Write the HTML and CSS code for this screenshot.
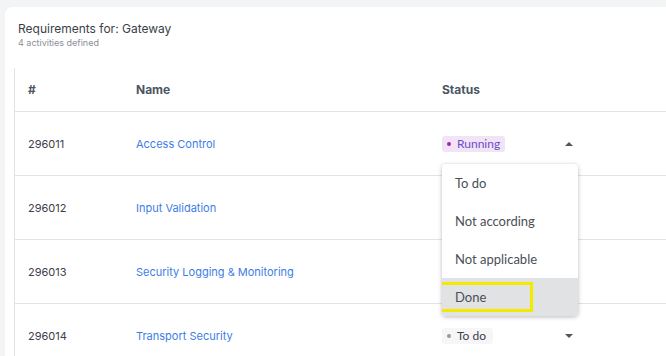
FILE: index.html
```html
<!DOCTYPE html>
<html lang="en">

<head>
    <meta charset="UTF-8">
    <meta name="viewport" content="width=device-width, initial-scale=1.0">
    <title>Requirements - Gateway</title>
    <link rel="stylesheet" href="styles.css">
</head>

<body>
    <section class="card">
        <div class="card-head">
            <h2 class="title">Requirements for: Gateway</h2>
            <p class="subtitle">4 activities defined</p>
        </div>

        <div class="table">
            <div class="row head">
                <div class="cell">#</div>
                <div class="cell">Name</div>
                <div class="cell">Status</div>
            </div>

            <div class="row">
                <div class="cell num">296011</div>
                <div class="cell"><a href="#" class="link">Access Control</a></div>
                <div class="cell">
                    <div class="select open">
                        <span class="badge running"><span class="dot"></span>Running</span>
                        <span class="caret up"></span>

                        <ul class="menu">
                            <li>To do</li>
                            <li>Not according</li>
                            <li>Not applicable</li>
                            <li class="active"><span class="focus">Done</span></li>
                        </ul>
                    </div>
                </div>
            </div>

            <div class="row">
                <div class="cell num">296012</div>
                <div class="cell"><a href="#" class="link">Input Validation</a></div>
                <div class="cell"></div>
            </div>

            <div class="row">
                <div class="cell num">296013</div>
                <div class="cell"><a href="#" class="link">Security Logging &amp; Monitoring</a></div>
                <div class="cell"></div>
            </div>

            <div class="row last">
                <div class="cell num">296014</div>
                <div class="cell"><a href="#" class="link">Transport Security</a></div>
                <div class="cell">
                    <div class="select">
                        <span class="badge todo"><span class="dot"></span>To do</span>
                        <span class="caret down"></span>
                    </div>
                </div>
            </div>
        </div>
    </section>
</body>

</html>
```

FILE: styles.css
```css
html,
body {
    height: 100%;
    overflow: hidden;
}

body {
    font-family: Inter, "Open Sans", sans-serif;
    background-color: #f3f4f6;
    margin: 0;
    padding: 7px 0 0 5px;
    box-sizing: border-box;
    display: flex;
}

.card {
    flex: 1;
    background: #fff;
    border-radius: 8px 0 0 0;
    padding: 14px 0 0 9px;
    box-sizing: border-box;
    overflow: hidden;
}

.card-head {
    padding-left: 4px;
}

.title {
    font-size: 12px;
    font-weight: 400;
    color: #3a3f47;
    margin: 0;
    line-height: 16px;
}

.subtitle {
    font-size: 9px;
    color: #8a8f98;
    margin: 0;
    line-height: 12px;
}

.table {
    margin-top: 19px;
    border-left: 1px solid #e2e3e6;
}

.row {
    display: grid;
    grid-template-columns: 108px 306px 1fr;
    align-items: center;
    height: 63px;
    border-bottom: 1px solid #e2e3e6;
}

.row.head {
    height: 43px;
}

.row.last {
    border-bottom: none;
}

.cell {
    padding-left: 13px;
    font-size: 11px;
    color: #3c4048;
}

.head .cell {
    font-size: 12px;
    font-weight: 700;
    color: #4b5563;
}

.link {
    color: #3d7de6;
    text-decoration: none;
}

.select {
    position: relative;
    display: flex;
    align-items: center;
    justify-content: space-between;
    width: 135px;
}

.badge {
    display: inline-flex;
    align-items: center;
    height: 16px;
    padding: 0 5px 0 5px;
    border-radius: 3px;
    font-family: Lato, sans-serif;
    font-size: 12px;
}

.badge .dot {
    width: 4px;
    height: 4px;
    border-radius: 50%;
    margin-right: 6px;
}

.badge.running {
    background: #f3e3f6;
    color: #6a4fc8;
}

.badge.running .dot {
    background: #9c27b0;
}

.badge.todo {
    background: #f6f6f7;
    color: #3c4048;
    padding-right: 7px;
}

.badge.todo .dot {
    background: #9a9a9a;
}

.caret {
    width: 0;
    height: 0;
    margin-right: 4px;
    border-left: 4px solid transparent;
    border-right: 4px solid transparent;
}

.caret.up {
    border-bottom: 4px solid #555;
}

.caret.down {
    border-top: 4px solid #555;
}

.menu {
    position: absolute;
    top: 28px;
    left: 0;
    width: 136px;
    margin: 0;
    padding: 0;
    list-style: none;
    background: #fff;
    border-radius: 4px;
    box-shadow: 0 1px 4px rgba(0, 0, 0, 0.28);
    overflow: hidden;
    z-index: 2;
}

.menu li {
    height: 38px;
    line-height: 38px;
    padding-left: 13px;
    font-family: Lato, sans-serif;
    font-size: 13px;
    color: #4a4f57;
}

.menu li.active {
    background: #e1e2e4;
    position: relative;
}

.menu .focus::before {
    content: "";
    position: absolute;
    left: -4px;
    top: 4px;
    width: 89px;
    height: 24px;
    border: 3px solid #f3ea00;
}
```
